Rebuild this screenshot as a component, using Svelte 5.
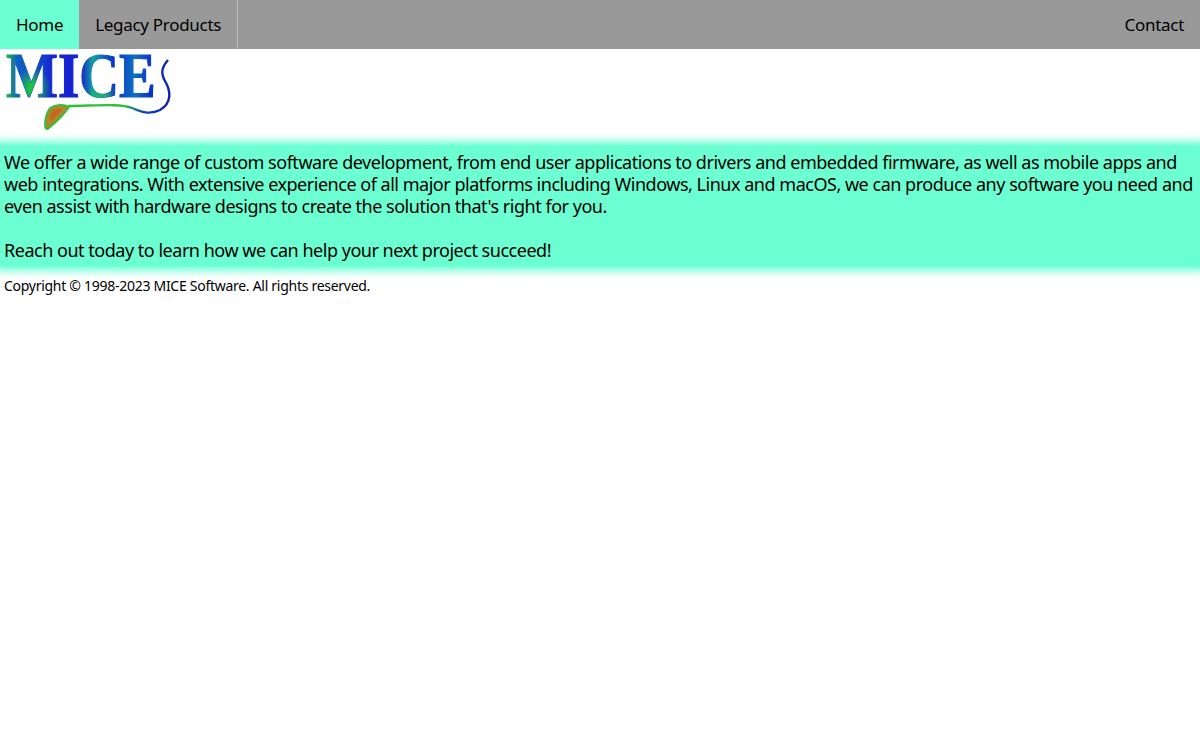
<script>
  const links = [
    { label: 'Home', active: true },
    { label: 'Legacy Products' }
  ];
</script>

<nav class="topnav">
  {#each links as link}
    <a href="#top" class="item" class:active={link.active}>{link.label}</a>
  {/each}
  <a href="#top" class="item contact">Contact</a>
</nav>

<div class="logo">
  <svg width="176" height="88" viewBox="0 0 176 88" role="img" aria-label="MICE">
    <defs>
      <linearGradient id="ink" x1="0" y1="0" x2="1" y2="0">
        <stop offset="0" stop-color="#20c030" />
        <stop offset="0.07" stop-color="#1060c0" />
        <stop offset="0.2" stop-color="#1050c8" />
        <stop offset="0.3" stop-color="#1428d0" />
        <stop offset="0.5" stop-color="#1420d0" />
        <stop offset="0.58" stop-color="#12a0a0" />
        <stop offset="0.72" stop-color="#1030d0" />
        <stop offset="0.86" stop-color="#1070c0" />
        <stop offset="1" stop-color="#1020c8" />
      </linearGradient>
      <radialGradient id="glowM" gradientUnits="userSpaceOnUse" cx="33" cy="34" r="18">
        <stop offset="0.2" stop-color="#20d030" stop-opacity="0.9" />
        <stop offset="1" stop-color="#20d030" stop-opacity="0" />
      </radialGradient>
      <radialGradient id="glowC" gradientUnits="userSpaceOnUse" cx="102" cy="40" r="14">
        <stop offset="0.2" stop-color="#20c060" stop-opacity="0.9" />
        <stop offset="1" stop-color="#20c060" stop-opacity="0" />
      </radialGradient>
      <linearGradient id="tail" gradientUnits="userSpaceOnUse" x1="68" y1="0" x2="172" y2="0">
        <stop offset="0" stop-color="#30c030" />
        <stop offset="0.55" stop-color="#30c040" />
        <stop offset="0.72" stop-color="#1040c0" />
        <stop offset="1" stop-color="#1020b0" />
      </linearGradient>
      <filter id="soft"><feGaussianBlur stdDeviation="0.45" /></filter>
    </defs>
    <g filter="url(#soft)">
      <g transform="scale(1 1.16)">
        <text x="6" y="41.5" class="word" fill="url(#ink)" stroke="url(#ink)" stroke-width="1">MICE</text>
        <text x="6" y="41.5" class="word" fill="url(#glowM)">MICE</text>
        <text x="6" y="41.5" class="word" fill="url(#glowC)">MICE</text>
      </g>
      <path d="M168 11 C161 19 161 25 165 32 C171 42 172 54 160 61 C150 66 141 63 132 59 C120 54 92 57 68 57" fill="none" stroke="url(#tail)" stroke-width="2.4" />
      <path d="M50 59 C56 55 64 55 69 58 C65 64 59 71 49 79 C47 81 45 80 45 76 C45 69 47 63 50 59 Z" fill="#b08828" stroke="#2cc040" stroke-width="1.8" />
      <path d="M52 62 C56 59 60 59 62 60 C59 65 55 69 50 72 C50 68 50 65 52 62 Z" fill="#c06a20" />
    </g>
  </svg>
</div>

<main class="band">
  We offer a wide range of custom software development, from end user applications to drivers and embedded firmware, as well as mobile apps and web integrations. With extensive experience of all major platforms including Windows, Linux and macOS, we can produce any software you need and even assist with hardware designs to create the solution that's right for you.
  <br /><br />
  Reach out today to learn how we can help your next project succeed!
</main>

<footer>Copyright © 1998-2023 MICE Software. All rights reserved.</footer>

<style>
  :global(body) {
    margin: 0;
    background: #fff;
    font-family: "Noto Sans", Tahoma, sans-serif;
    color: #000;
  }

  .topnav {
    display: flex;
    background: #999;
    height: 49px;
  }

  .item {
    padding: 0 16px;
    line-height: 49px;
    font-size: 17px;
    letter-spacing: -0.3px;
    color: #000;
    text-decoration: none;
    border-right: 1px solid #bbb;
  }

  .item.active {
    background: #6cffd2;
    border-right: none;
  }

  .item.contact {
    margin-left: auto;
    border-right: none;
  }

  .logo {
    height: 88px;
  }

  .logo svg {
    display: block;
    overflow: visible;
  }

  .word {
    font-family: "Liberation Serif", serif;
    font-weight: 700;
    font-size: 55px;
  }

  .band {
    background: #6cffd2;
    box-shadow: 0 0 8px 4px #6cffd2;
    margin-top: 8px;
    padding: 6px 4px;
    font-size: 18px;
    letter-spacing: -0.48px;
    line-height: 22px;
  }

  footer {
    padding: 10px 4px 0;
    font-size: 14px;
    letter-spacing: -0.28px;
    line-height: 18px;
  }
</style>
